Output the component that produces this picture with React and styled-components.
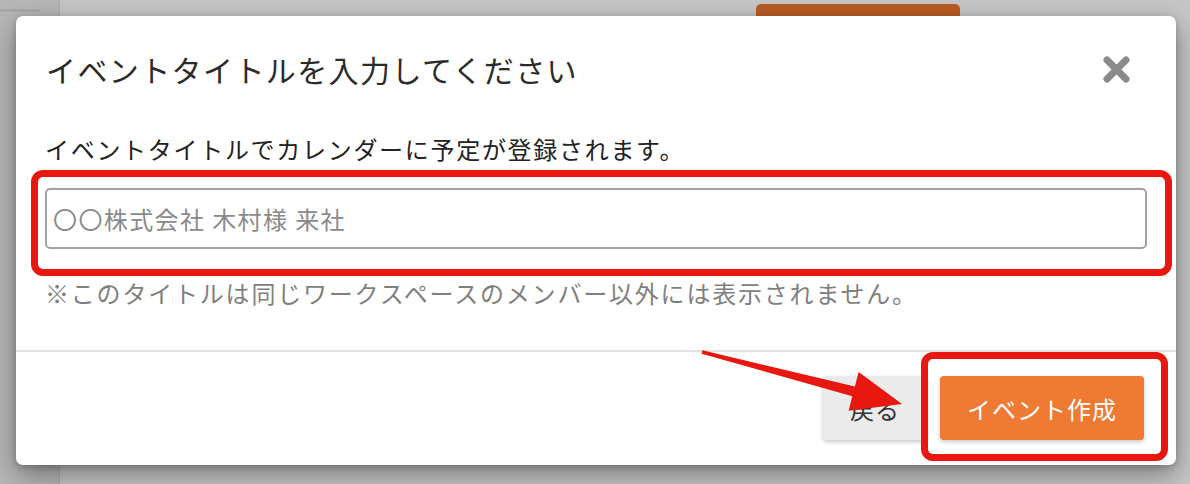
import React from "react";
import styled, { createGlobalStyle } from "styled-components";

const GlobalStyle = createGlobalStyle`
  html, body {
    margin: 0;
    padding: 0;
    background: #c6c6c6;
  }
  * {
    box-sizing: border-box;
  }
`;

const Page = styled.div`
  position: relative;
  width: 1190px;
  height: 484px;
  overflow: hidden;
  background: #c6c6c6;
  font-family: "Noto Sans CJK JP", "Noto Sans", sans-serif;
  display: flex;
  padding: 16px 14px 19px 16px;
`;

const SideStrip = styled.div`
  position: absolute;
  top: 0;
  left: 0;
  width: 60px;
  height: 100%;
  background: #b7b7b7;
  border-right: 1px solid #adadad;

  &::after {
    content: "";
    position: absolute;
    top: 9px;
    left: 0;
    width: 40px;
    height: 3px;
    background: #a9a9a9;
  }
`;

const BackButton = styled.div`
  position: absolute;
  top: 4px;
  left: 756px;
  width: 204px;
  height: 30px;
  border-radius: 5px;
  background: #b85c23;
`;

const Modal = styled.div`
  position: relative;
  flex: 1;
  background: #fff;
  border-radius: 7px;
  box-shadow: 0 10px 28px rgba(0, 0, 0, 0.38), 0 2px 6px rgba(0, 0, 0, 0.2);
  display: flex;
  flex-direction: column;
`;

const Header = styled.div`
  display: flex;
  align-items: center;
  justify-content: space-between;
  padding: 33px 46px 0 30px;
`;

const Title = styled.h1`
  margin: 0;
  font-size: 30px;
  letter-spacing: 1.4px;
  line-height: 40px;
  font-weight: 400;
  color: #2b2b2b;
`;

const CloseButton = styled.button`
  border: 0;
  background: transparent;
  padding: 0;
  width: 27px;
  height: 27px;
  display: flex;
  cursor: pointer;
`;

const Body = styled.div`
  padding: 44px 29px 41px;
  display: flex;
  flex-direction: column;
`;

const Lead = styled.p`
  margin: 0;
  font-size: 24px;
  letter-spacing: 1.7px;
  line-height: 32px;
  color: #222;
`;

const TitleInput = styled.input`
  margin-top: 23px;
  height: 61px;
  width: 100%;
  border: 2px solid #a3a3a3;
  border-radius: 5px;
  padding: 0 6px;
  font-family: inherit;
  font-size: 24px;
  letter-spacing: 1.4px;
  color: #333;
  outline: none;

  &::placeholder {
    color: #8a8a8a;
  }
`;

const Note = styled.p`
  margin: 28px 0 0;
  font-size: 24px;
  letter-spacing: 1.8px;
  line-height: 32px;
  color: #7f7f7f;
`;

const Divider = styled.hr`
  margin: 0;
  border: 0;
  height: 2px;
  background: #e2e2e2;
`;

const Footer = styled.div`
  flex: 1;
  display: flex;
  justify-content: flex-end;
  align-items: flex-start;
  gap: 13px;
  padding: 24px 32px 0;
`;

const Button = styled.button`
  height: 64px;
  border: 0;
  border-radius: 4px;
  font-family: inherit;
  font-size: 24px;
  letter-spacing: 1px;
  padding: 0;
  width: ${(p) => (p.$primary ? "204px" : "104px")};
  background: ${(p) => (p.$primary ? "#ee7a33" : "#ebebeb")};
  color: ${(p) => (p.$primary ? "#fff" : "#333")};
  box-shadow: 0 2px 4px rgba(0, 0, 0, 0.22);
  cursor: pointer;
`;

const Highlight = styled.div`
  position: absolute;
  left: ${(p) => p.$x}px;
  top: ${(p) => p.$y}px;
  width: ${(p) => p.$w}px;
  height: ${(p) => p.$h}px;
  border: 7px solid #e8170f;
  border-radius: 12px;
  pointer-events: none;
`;

const ArrowLayer = styled.svg`
  position: absolute;
  left: 0;
  top: 0;
  pointer-events: none;
`;

const CloseIcon = () => (
  <svg width="27" height="27" viewBox="0 0 27 27">
    <path
      d="M4 4 L23 23 M23 4 L4 23"
      stroke="#8a8a8a"
      strokeWidth="7"
      strokeLinecap="round"
    />
  </svg>
);

export default function App() {
  return (
    <>
      <GlobalStyle />
      <Page>
        <SideStrip />
        <BackButton />
        <Modal>
          <Header>
            <Title>イベントタイトルを入力してください</Title>
            <CloseButton aria-label="閉じる">
              <CloseIcon />
            </CloseButton>
          </Header>
          <Body>
            <Lead>イベントタイトルでカレンダーに予定が登録されます。</Lead>
            <TitleInput placeholder="〇〇株式会社 木村様 来社" />
            <Note>※このタイトルは同じワークスペースのメンバー以外には表示されません。</Note>
          </Body>
          <Divider />
          <Footer>
            <Button>戻る</Button>
            <Button $primary>イベント作成</Button>
          </Footer>
        </Modal>
        <Highlight $x={31} $y={170} $w={1141} $h={106} />
        <Highlight $x={921} $y={352} $w={247} $h={109} />
        <ArrowLayer width="1190" height="484">
          <polygon
            points="702.4,350.3 854.9,386.6 858.6,372 902,404 848.6,410.8 852.3,396.2 701.6,353.7"
            fill="#e8170f"
          />
        </ArrowLayer>
      </Page>
    </>
  );
}
